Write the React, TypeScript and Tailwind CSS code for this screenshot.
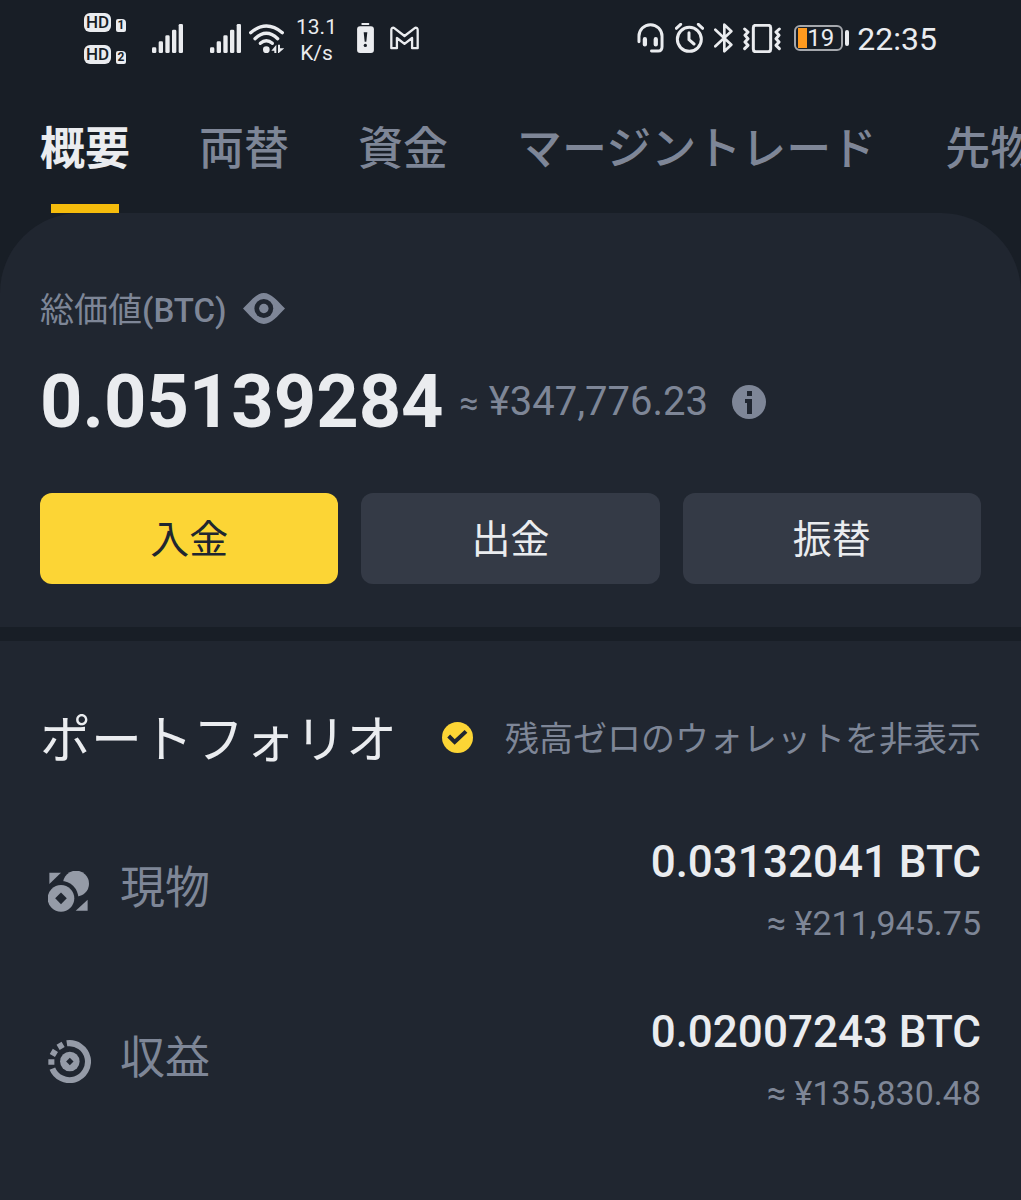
import React from "react";

type IconProps = { className?: string };

const tabs = ["概要", "両替", "資金", "マージントレード", "先物"];

const actions = [
  { label: "入金", primary: true },
  { label: "出金", primary: false },
  { label: "振替", primary: false },
];

const wallets = [
  { name: "現物", Icon: SpotIcon, btc: "0.03132041 BTC", yen: "≈ ¥211,945.75" },
  { name: "収益", Icon: EarnIcon, btc: "0.02007243 BTC", yen: "≈ ¥135,830.48" },
];

function SignalIcon({ className }: IconProps) {
  return (
    <svg className={className} width="31" height="29" viewBox="0 0 93 87" fill="currentColor">
      <rect x="0" y="70" width="13" height="17" rx="4" />
      <rect x="20" y="52" width="13" height="35" rx="4" />
      <rect x="40" y="34" width="13" height="53" rx="4" />
      <rect x="60" y="17" width="13" height="70" rx="4" />
      <rect x="80" y="0" width="13" height="87" rx="4" />
    </svg>
  );
}

function WifiIcon({ className }: IconProps) {
  return (
    <svg className={className} width="35" height="29" viewBox="0 0 105 87" fill="none" stroke="currentColor" strokeWidth="10" strokeLinecap="round">
      <path d="M5 26Q52-14 100 26" />
      <path d="M18 44Q52 12 86 44" />
      <path d="M34 58Q52 42 70 58" />
      <circle cx="52" cy="77" r="10" fill="currentColor" stroke="none" />
      <path d="M67 80L82 62V87H76V80ZM87 62H93V73H106L87 89Z" fill="currentColor" stroke="none" />
    </svg>
  );
}

function BatteryAlertIcon({ className }: IconProps) {
  return (
    <svg className={className} width="17" height="30" viewBox="0 0 51 91" fill="currentColor">
      <rect x="13" y="0" width="24" height="6" rx="2" />
      <rect x="0" y="10" width="51" height="81" rx="9" />
      <path d="M20 28H31L28 57H23Z" fill="#181e26" />
      <circle cx="25" cy="68" r="5" fill="#181e26" />
    </svg>
  );
}

function MailIcon({ className }: IconProps) {
  return (
    <svg className={className} width="29" height="24" viewBox="0 0 88 72" fill="none" stroke="currentColor" strokeWidth="7" strokeLinejoin="round">
      <path d="M4 67V12Q4 4 12 5L44 30L76 5Q84 4 84 12V67H67V36L44 54L21 36V67Z" />
    </svg>
  );
}

function HeadsetIcon({ className }: IconProps) {
  return (
    <svg className={className} width="27" height="30" viewBox="0 0 80 91" fill="none" stroke="currentColor" strokeWidth="9" strokeLinecap="round">
      <path d="M5 57V40A35 35 0 0 1 75 40V72Q75 85 63 85H43" />
      <path d="M23 49V65M56 49V65" strokeWidth="13" />
    </svg>
  );
}

function AlarmIcon({ className }: IconProps) {
  return (
    <svg className={className} width="29" height="30" viewBox="0 0 87 90" fill="none" stroke="currentColor" strokeWidth="9" strokeLinecap="round">
      <circle cx="43" cy="49" r="36" />
      <path d="M4 16L17 4M70 4L83 16M42 29V50L57 63" />
    </svg>
  );
}

function BluetoothIcon({ className }: IconProps) {
  return (
    <svg className={className} width="19" height="30" viewBox="0 0 57 90" fill="none" stroke="currentColor" strokeWidth="8" strokeLinecap="round" strokeLinejoin="round">
      <path d="M4 20L52 65L31 85V5L52 25L4 70" />
    </svg>
  );
}

function VibrateIcon({ className }: IconProps) {
  return (
    <svg className={className} width="38" height="29" viewBox="0 0 114 87" fill="none" stroke="currentColor" strokeWidth="9" strokeLinecap="round" strokeLinejoin="round">
      <rect x="31" y="4" width="52" height="79" rx="7" />
      <path d="M5 15L15 24L6 34L15 44L6 54L15 64L5 74" />
      <path d="M109 15L99 24L108 34L99 44L108 54L99 64L109 74" />
    </svg>
  );
}

function EyeIcon({ className }: IconProps) {
  return (
    <svg className={className} width="42" height="31" viewBox="0 0 125 92" fill="currentColor">
      <path d="M0 46C22 24 40 0 62 0S103 24 125 46C103 68 85 92 62 92S22 68 0 46Z" />
      <circle cx="62" cy="46" r="28" fill="#202630" />
      <circle cx="62" cy="46" r="14" />
    </svg>
  );
}

function InfoIcon({ className }: IconProps) {
  return (
    <svg className={className} width="35" height="35" viewBox="0 0 35 35">
      <circle cx="17" cy="17" r="17" fill="currentColor" />
      <path d="M15 6H20V11H15ZM13 14H20V29H15V18H13Z" fill="#202630" />
    </svg>
  );
}

function SpotIcon({ className }: IconProps) {
  return (
    <svg className={className} width="41" height="41" viewBox="0 0 120 120" fill="currentColor">
      <circle cx="82" cy="37" r="38" />
      <circle cx="38" cy="80" r="51" fill="#202630" />
      <path d="M4 5H38L4 38Z" />
      <circle cx="38" cy="80" r="39" />
      <path d="M38 63L55 80L38 97L21 80Z" fill="#202630" />
      <path d="M116 84V116H81Z" />
    </svg>
  );
}

function EarnIcon({ className }: IconProps) {
  return (
    <svg className={className} width="43" height="43" viewBox="0 0 128 128" fill="none" stroke="currentColor" strokeWidth="18">
      <path d="M56 10A55 55 0 1 1 13 85" />
      <path d="M30 22L45 13M13 46L22 31M10 74V57" />
      <circle cx="65" cy="64" r="29" fill="currentColor" stroke="none" />
      <path d="M65 53L76 64L65 75L54 64Z" fill="#202630" stroke="none" />
    </svg>
  );
}

function SimBadge({ slot }: { slot: string }) {
  return (
    <div className="flex items-end gap-[5px] text-[#181e26]">
      <span className="flex h-[19px] w-[27px] items-center justify-center rounded-md bg-[#eaecef] text-[17px] font-medium leading-none">
        HD
      </span>
      <span className="flex h-[13px] w-[10px] items-center justify-center rounded-xs rounded-tr-sm bg-[#eaecef] text-xs font-bold leading-none">
        {slot}
      </span>
    </div>
  );
}

function StatusBar() {
  return (
    <div className="flex h-[76px] items-center justify-between px-[84px] text-[#eaecef]">
      <div className="flex items-center">
        <div className="flex flex-col gap-[13px]">
          <SimBadge slot="1" />
          <SimBadge slot="2" />
        </div>
        <SignalIcon className="ml-[26px]" />
        <SignalIcon className="ml-[27px]" />
        <WifiIcon className="ml-2" />
        <div className="ml-3 pt-1 text-center text-[21px] leading-[26px]">
          <p>13.1</p>
          <p>K/s</p>
        </div>
        <BatteryAlertIcon className="ml-5" />
        <MailIcon className="ml-4" />
      </div>

      <div className="flex items-center">
        <HeadsetIcon />
        <AlarmIcon className="ml-[11px]" />
        <BluetoothIcon className="ml-[10px]" />
        <VibrateIcon className="ml-[10px]" />
        <div className="ml-[13px] flex items-center gap-[2px]">
          <div className="flex h-[26px] w-[49px] items-center rounded-md border-2 border-[#a5a8ad] pl-[2px]">
            <span className="h-5 w-[9px] bg-[#ff9a1f]" />
            <span className="text-2xl leading-none">19</span>
          </div>
          <span className="h-4 w-1 rounded-xs bg-[#eaecef]" />
        </div>
        <span className="ml-2 pt-[2px] text-[32px] leading-none">22:35</span>
      </div>
    </div>
  );
}

export default function App() {
  return (
    <div className="min-h-screen overflow-hidden bg-[#181e26] font-['Roboto','Noto_Sans_CJK_JP',sans-serif] text-[#eaecef]">
      <StatusBar />

      <nav className="flex h-[137px] gap-[69px] overflow-x-auto overflow-y-hidden pl-10 [scrollbar-width:none]">
        {tabs.map((tab, i) => (
          <button
            key={tab}
            className={
              i === 0
                ? "flex shrink-0 flex-col items-center justify-between whitespace-nowrap pt-[38px] text-[45px] font-bold leading-[72px]"
                : "flex shrink-0 flex-col items-center justify-between whitespace-nowrap pt-[38px] text-[45px] font-medium leading-[72px] text-[#7e8697]"
            }
          >
            {tab}
            {i === 0 && <span className="h-[9px] w-[68px] bg-[#f5bc0c]" />}
          </button>
        ))}
      </nav>

      <main>
        <section className="rounded-t-[80px] bg-[#202630] px-10 pb-[43px] pt-[72px]">
          <div className="flex items-center gap-4 text-[#7e8697]">
            <p className="text-[34px] leading-[50px]">
              総価値<span className="text-[33px] font-medium">(BTC)</span>
            </p>
            <button className="pb-1" aria-label="残高を隠す">
              <EyeIcon />
            </button>
          </div>

          <div className="mt-4 flex h-[100px] items-center">
            <p className="text-[74px] font-bold leading-none">0.05139284</p>
            <p className="ml-4 text-[40px] leading-none text-[#7e8697]">
              <span className="text-[34px]">≈</span> ¥347,776.23
            </p>
            <button className="ml-6 text-[#7e8697]" aria-label="詳細">
              <InfoIcon />
            </button>
          </div>

          <div className="mt-[41px] grid grid-cols-3 gap-[23px]">
            {actions.map(({ label, primary }) => (
              <button
                key={label}
                className={
                  primary
                    ? "h-[91px] rounded-xl bg-[#fcd535] pt-1 text-[39px] text-[#202630]"
                    : "h-[91px] rounded-xl bg-[#343a46] pt-1 text-[39px]"
                }
              >
                {label}
              </button>
            ))}
          </div>
        </section>

        <section className="mt-[14px] bg-[#202630] px-10 pb-[85px] pt-14">
          <div className="flex items-center justify-between">
            <h2 className="pt-1 text-[51px] leading-[80px]">ポートフォリオ</h2>
            <label className="flex items-center gap-8 text-[34px] leading-[50px] text-[#7e8697]">
              <span className="relative mb-1 h-[31px] w-[31px]">
                <input
                  type="checkbox"
                  defaultChecked
                  className="block h-[31px] w-[31px] appearance-none rounded-full bg-[#fcd535]"
                />
                <svg className="pointer-events-none absolute inset-0" width="31" height="31" viewBox="0 0 93 93" fill="none" stroke="#202630" strokeWidth="12">
                  <path d="M20 42L38 60L72 28" />
                </svg>
              </span>
              残高ゼロのウォレットを非表示
            </label>
          </div>

          <ul className="mt-[25px]">
            {wallets.map(({ name, Icon, btc, yen }) => (
              <li key={name} className="flex h-[170px] items-center justify-between">
                <div className="flex items-center text-[#7e8697]">
                  <span className="flex w-20 justify-start pl-2">
                    <Icon className="text-[#959ba7]" />
                  </span>
                  <span className="pb-1 text-[45px] leading-[64px]">{name}</span>
                </div>
                <div className="text-right">
                  <p className="text-[44px] font-medium leading-[64px]">{btc}</p>
                  <p className="text-[34px] leading-[58px] text-[#7e8697]">{yen}</p>
                </div>
              </li>
            ))}
          </ul>
        </section>
      </main>
    </div>
  );
}
